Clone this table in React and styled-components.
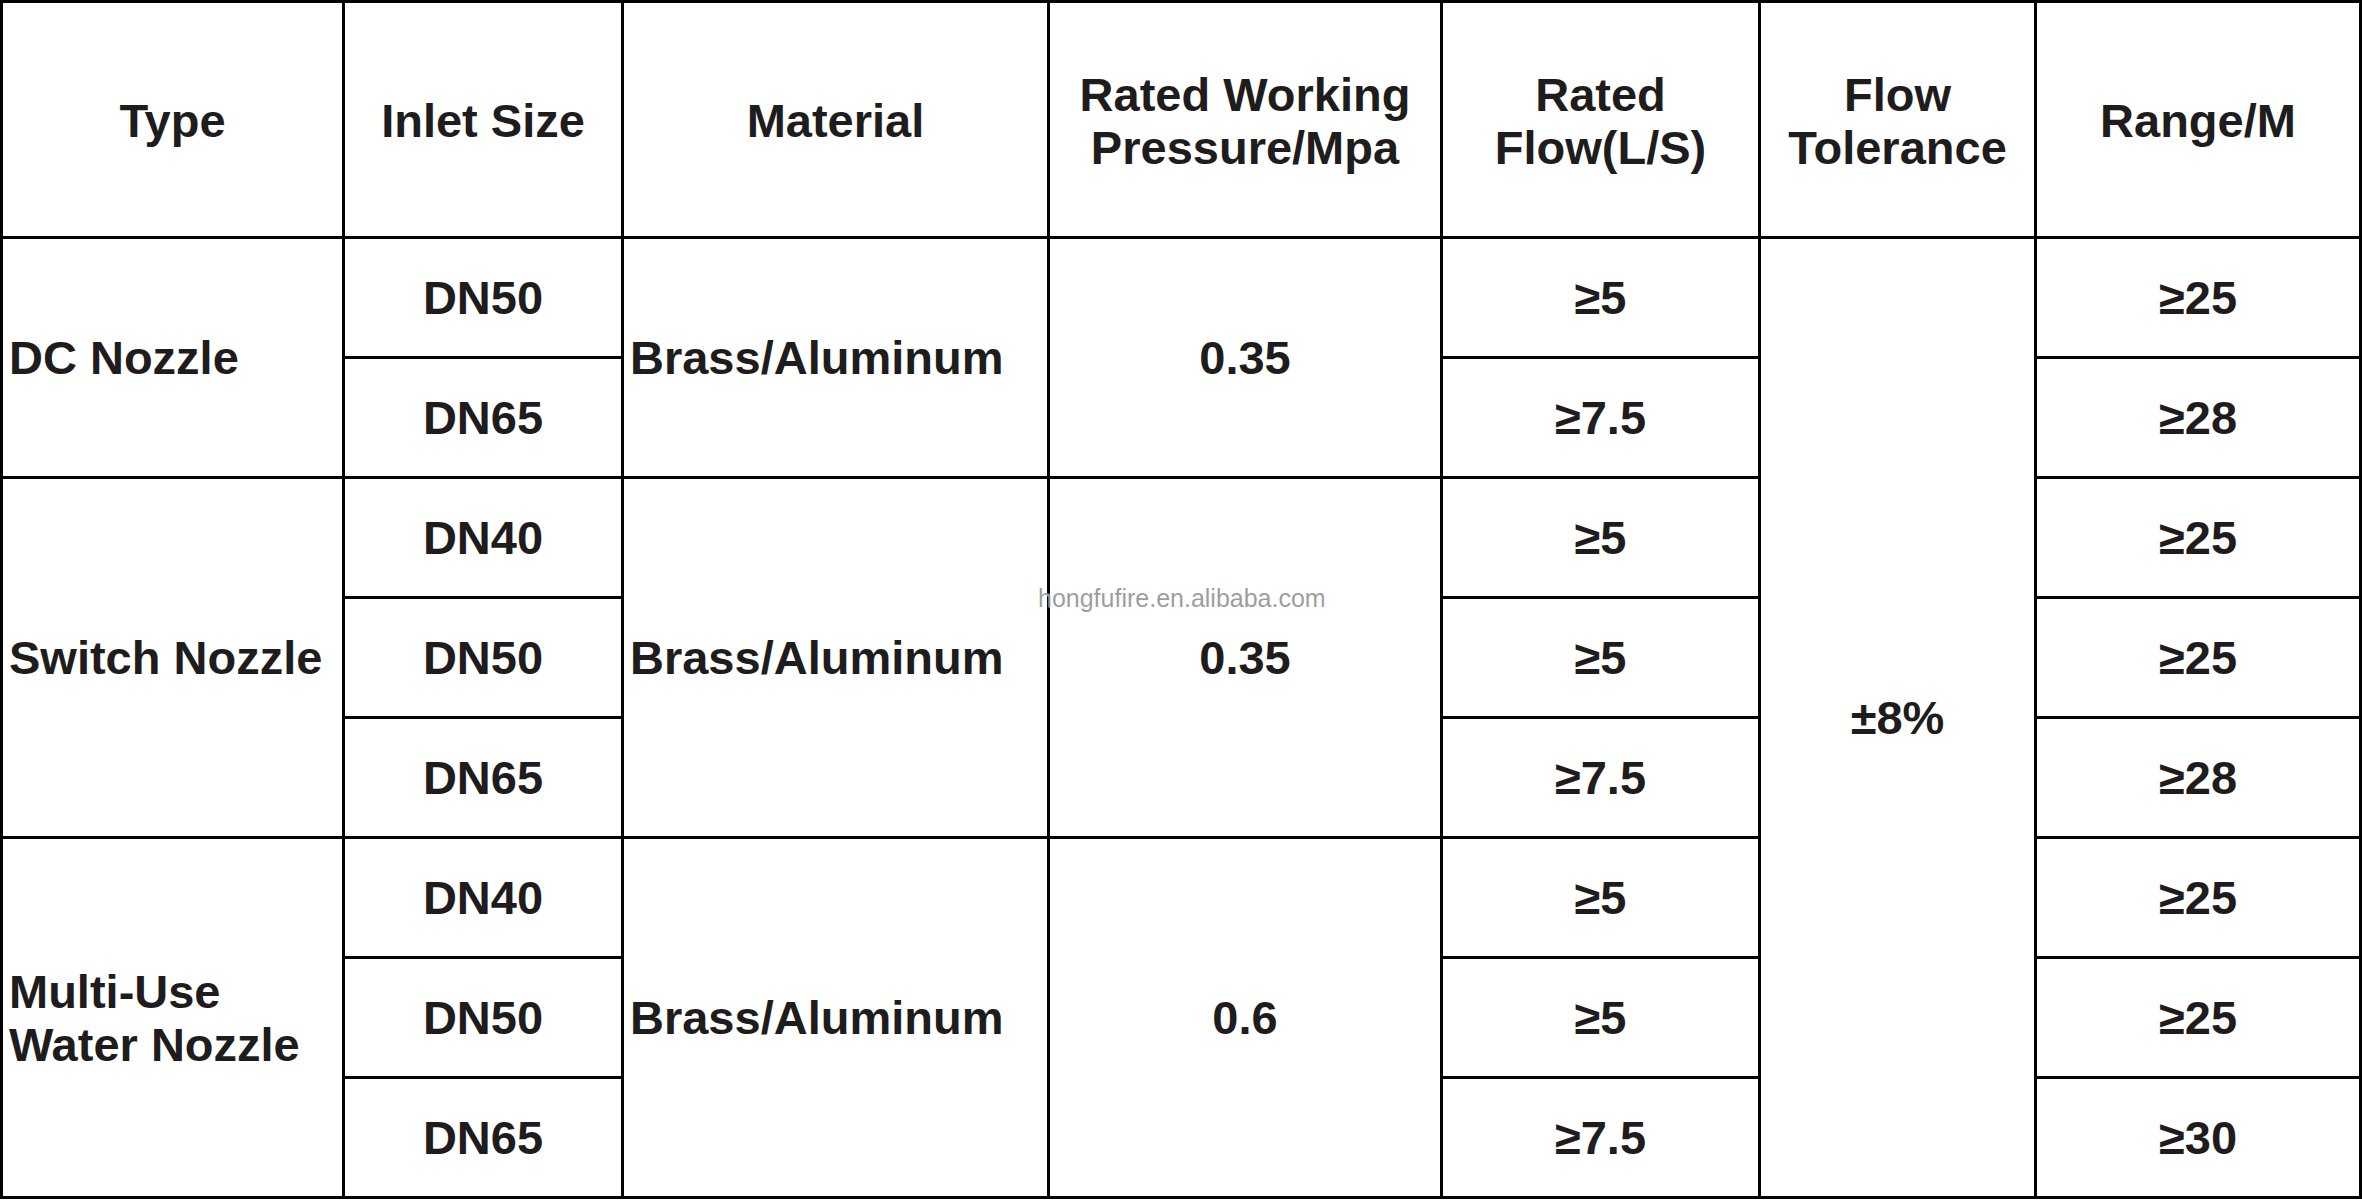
import styled, { createGlobalStyle } from "styled-components";

const GlobalStyle = createGlobalStyle`
  html, body {
    margin: 0;
    padding: 0;
    background: #ffffff;
  }
`;

const Sheet = styled.div`
  position: relative;
  width: 2362px;
`;

const Grid = styled.div`
  display: grid;
  grid-template-columns: 339px 276px 423px 390px 315px 273px 322px;
  grid-template-rows: 233px repeat(8, 117px);
  gap: 3px;
  padding: 3px;
  background: #000000;
  font-family: "Liberation Sans", Arial, sans-serif;
  font-weight: 700;
  font-size: 47px;
  line-height: 1.13;
  color: #1f1c1d;
`;

const Cell = styled.div`
  background: #ffffff;
  display: flex;
  align-items: center;
  justify-content: ${(p) => (p.$left ? "flex-start" : "center")};
  text-align: ${(p) => (p.$left ? "left" : "center")};
  padding: 1px ${(p) => (p.$left ? "6px" : "0")} 0;
  grid-row: span ${(p) => p.$span || 1};
  white-space: pre-line;
`;

const HeadCell = styled(Cell)`
  padding-top: 3px;
`;

const Watermark = styled.div`
  position: absolute;
  left: 1038px;
  top: 584px;
  font-family: "Liberation Sans", Arial, sans-serif;
  font-size: 25px;
  color: rgba(140, 140, 140, 0.85);
  text-shadow: 1px 1px 1px rgba(255, 255, 255, 0.7);
  pointer-events: none;
`;

const headers = [
  "Type",
  "Inlet Size",
  "Material",
  "Rated Working\nPressure/Mpa",
  "Rated\nFlow(L/S)",
  "Flow\nTolerance",
  "Range/M",
];

const groups = [
  {
    type: "DC Nozzle",
    pressure: "0.35",
    rows: [
      ["DN50", "≥5", "≥25"],
      ["DN65", "≥7.5", "≥28"],
    ],
  },
  {
    type: "Switch Nozzle",
    pressure: "0.35",
    rows: [
      ["DN40", "≥5", "≥25"],
      ["DN50", "≥5", "≥25"],
      ["DN65", "≥7.5", "≥28"],
    ],
  },
  {
    type: "Multi-Use\nWater Nozzle",
    pressure: "0.6",
    rows: [
      ["DN40", "≥5", "≥25"],
      ["DN50", "≥5", "≥25"],
      ["DN65", "≥7.5", "≥30"],
    ],
  },
];

export default function App() {
  const total = groups.reduce((n, g) => n + g.rows.length, 0);
  const cells = [];

  headers.forEach((h) => cells.push(<HeadCell key={"h" + h}>{h}</HeadCell>));

  groups.forEach((g, gi) => {
    g.rows.forEach((r, ri) => {
      const k = gi + "-" + ri;
      if (ri === 0) {
        cells.push(
          <Cell key={"t" + k} $left $span={g.rows.length}>
            {g.type}
          </Cell>
        );
      }
      cells.push(<Cell key={"i" + k}>{r[0]}</Cell>);
      if (ri === 0) {
        cells.push(
          <Cell key={"m" + k} $left $span={g.rows.length}>
            Brass/Aluminum
          </Cell>
        );
        cells.push(
          <Cell key={"p" + k} $span={g.rows.length}>
            {g.pressure}
          </Cell>
        );
      }
      cells.push(<Cell key={"f" + k}>{r[1]}</Cell>);
      if (gi === 0 && ri === 0) {
        cells.push(
          <Cell key="tol" $span={total}>
            ±8%
          </Cell>
        );
      }
      cells.push(<Cell key={"r" + k}>{r[2]}</Cell>);
    });
  });

  return (
    <>
      <GlobalStyle />
      <Sheet>
        <Grid>{cells}</Grid>
        <Watermark>hongfufire.en.alibaba.com</Watermark>
      </Sheet>
    </>
  );
}
